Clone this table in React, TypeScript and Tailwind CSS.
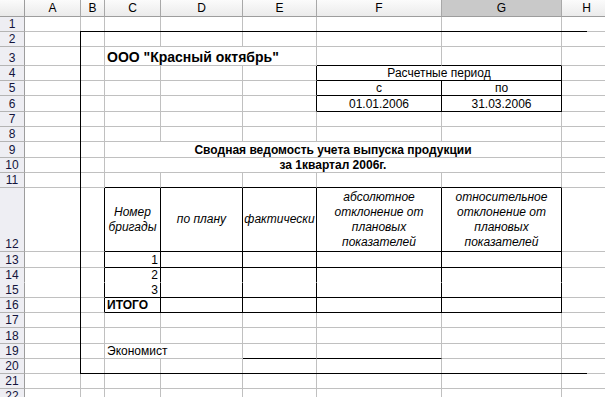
import React from 'react';

type Edge = 'g' | 'k' | 'n';
type CellSpec = {
  span?: string;
  text?: React.ReactNode;
  cls?: string;
  r?: Edge;
  b?: Edge;
};
type RowSpec = { n: number; cells: CellSpec[]; hb?: Edge };

const RIGHT: Record<Edge, string> = {
  g: 'border-r-[#c0c0c0]',
  k: 'border-r-black',
  n: 'border-r-transparent',
};
const BOTTOM: Record<Edge, string> = {
  g: 'border-b-[#c0c0c0]',
  k: 'border-b-black',
  n: 'border-b-transparent',
};

const LETTERS = ['A', 'B', 'C', 'D', 'E', 'F', 'G', 'H'];

const blank = (): CellSpec[] => [{}, {}, {}, {}, {}, {}, {}, {}];
const center = 'items-end justify-center';
const head = 'items-center justify-center text-center italic leading-[15px]';

const tableRow = (c: React.ReactNode = '', cls = 'items-end justify-end px-[2px]', b: Edge = 'k'): CellSpec[] => [
  { b: b === 'n' ? 'n' : 'g' },
  { r: 'k', b: b === 'n' ? 'n' : 'g' },
  { r: 'k', b, text: c, cls },
  { r: 'k', b },
  { r: 'k', b },
  { r: 'k', b },
  { r: 'k', b },
  { b: b === 'n' ? 'n' : 'g' },
];

const ROWS: RowSpec[] = [
  { n: 1, cells: blank() },
  { n: 2, cells: blank() },
  {
    n: 3,
    cells: [
      {},
      {},
      { span: 'col-span-3', text: 'ООО "Красный октябрь"', cls: 'items-end px-[2px] font-bold text-[14px] leading-[16px]' },
      { b: 'k' },
      { b: 'k' },
      {},
    ],
  },
  {
    n: 4,
    cells: [
      {},
      {},
      {},
      {},
      { r: 'k' },
      { span: 'col-span-2', r: 'k', b: 'k', text: 'Расчетные период', cls: center },
      {},
    ],
  },
  {
    n: 5,
    cells: [{}, {}, {}, {}, { r: 'k' }, { r: 'k', b: 'k', text: 'с', cls: center }, { r: 'k', b: 'k', text: 'по', cls: center }, {}],
  },
  {
    n: 6,
    cells: [
      {},
      {},
      {},
      {},
      { r: 'k' },
      { r: 'k', b: 'k', text: '01.01.2006', cls: center },
      { r: 'k', b: 'k', text: '31.03.2006', cls: center },
      {},
    ],
  },
  { n: 7, cells: blank() },
  { n: 8, cells: blank() },
  {
    n: 9,
    cells: [
      {},
      {},
      { span: 'col-span-5', text: 'Сводная ведомость учета выпуска продукции', cls: `${center} font-bold` },
      {},
    ],
  },
  {
    n: 10,
    cells: [{}, {}, { span: 'col-span-5', text: 'за 1квартал 2006г.', cls: `${center} font-bold` }, {}],
  },
  { n: 11, cells: [{}, {}, { b: 'k' }, { b: 'k' }, { b: 'k' }, { b: 'k' }, { b: 'k' }, {}] },
  {
    n: 12,
    cells: [
      {},
      { r: 'k' },
      { r: 'k', b: 'k', text: <>Номер<br />бригады</>, cls: head },
      { r: 'k', b: 'k', text: 'по плану', cls: head },
      { r: 'k', b: 'k', text: 'фактически', cls: head },
      { r: 'k', b: 'k', text: <>абсолютное<br />отклонение от<br />плановых<br />показателей</>, cls: head },
      { r: 'k', b: 'k', text: <>относительное<br />отклонение от<br />плановых<br />показателей</>, cls: head },
      {},
    ],
  },
  { n: 13, cells: tableRow('1') },
  { n: 14, cells: tableRow('2', undefined, 'n'), hb: 'n' },
  { n: 15, cells: tableRow('3') },
  { n: 16, cells: tableRow('ИТОГО', 'items-end px-[2px] font-bold') },
  { n: 17, cells: blank() },
  { n: 18, cells: blank() },
  {
    n: 19,
    cells: [{}, {}, { span: 'col-span-2', text: 'Экономист', cls: 'items-end px-[2px]' }, { b: 'k' }, { b: 'k' }, {}, {}],
  },
  { n: 20, cells: blank() },
  { n: 21, cells: blank() },
  { n: 22, cells: blank() },
];

const Cell = ({ s }: { s: CellSpec }) => (
  <div
    className={`${s.span ?? ''} flex whitespace-nowrap border-r border-b bg-white text-[12px] leading-[14px] text-black ${RIGHT[s.r ?? 'g']} ${BOTTOM[s.b ?? 'g']} ${s.cls ?? 'items-end px-[2px]'}`}
  >
    {s.text}
  </div>
);

export default function App() {
  return (
    <div className="relative h-[397px] w-[605px] overflow-hidden bg-white font-['Liberation_Sans',Arial,sans-serif]">
      <div className="grid grid-cols-[25px_56px_24px_56px_82px_74px_125px_120px_50px] grid-rows-[17px_15px_15px_19px_15px_15px_16px_15px_15px_16px_15px_15px_64px_16px_15px_15px_15px_15px_16px_15px_15px_15px_15px]">
        {/* column headers */}
        <div className="border-r border-b border-r-[#9d9d9d] border-b-[#9d9d9d] bg-gradient-to-b from-[#fbfbfb] to-[#e9e9e9]" />
        {LETTERS.map((l) => (
          <div
            key={l}
            className={`flex items-center justify-center border-r border-b border-r-[#a8a8a8] border-b-[#9d9d9d] text-[12px] leading-[14px] text-black ${
              l === 'G' ? 'bg-[#c9c9c9]' : 'bg-gradient-to-b from-[#fbfbfb] to-[#ebebeb]'
            }`}
          >
            {l}
          </div>
        ))}

        {ROWS.map((row) => (
          <React.Fragment key={row.n}>
            <div
              className={`flex items-end justify-center border-r border-b border-r-[#9d9d9d] bg-[#eeeef3] text-[12px] leading-[14px] text-[#14143c] ${
                row.hb === 'n' ? 'border-b-transparent' : 'border-b-[#b4b4b4]'
              }`}
            >
              {row.n}
            </div>
            {row.cells.map((c, i) => (
              <Cell key={i} s={c} />
            ))}
          </React.Fragment>
        ))}
      </div>

      {/* drawn frame around the form */}
      <div className="pointer-events-none absolute left-[80px] top-[31px] h-[343px] w-[507px] border-t border-l border-b border-black" />
    </div>
  );
}
